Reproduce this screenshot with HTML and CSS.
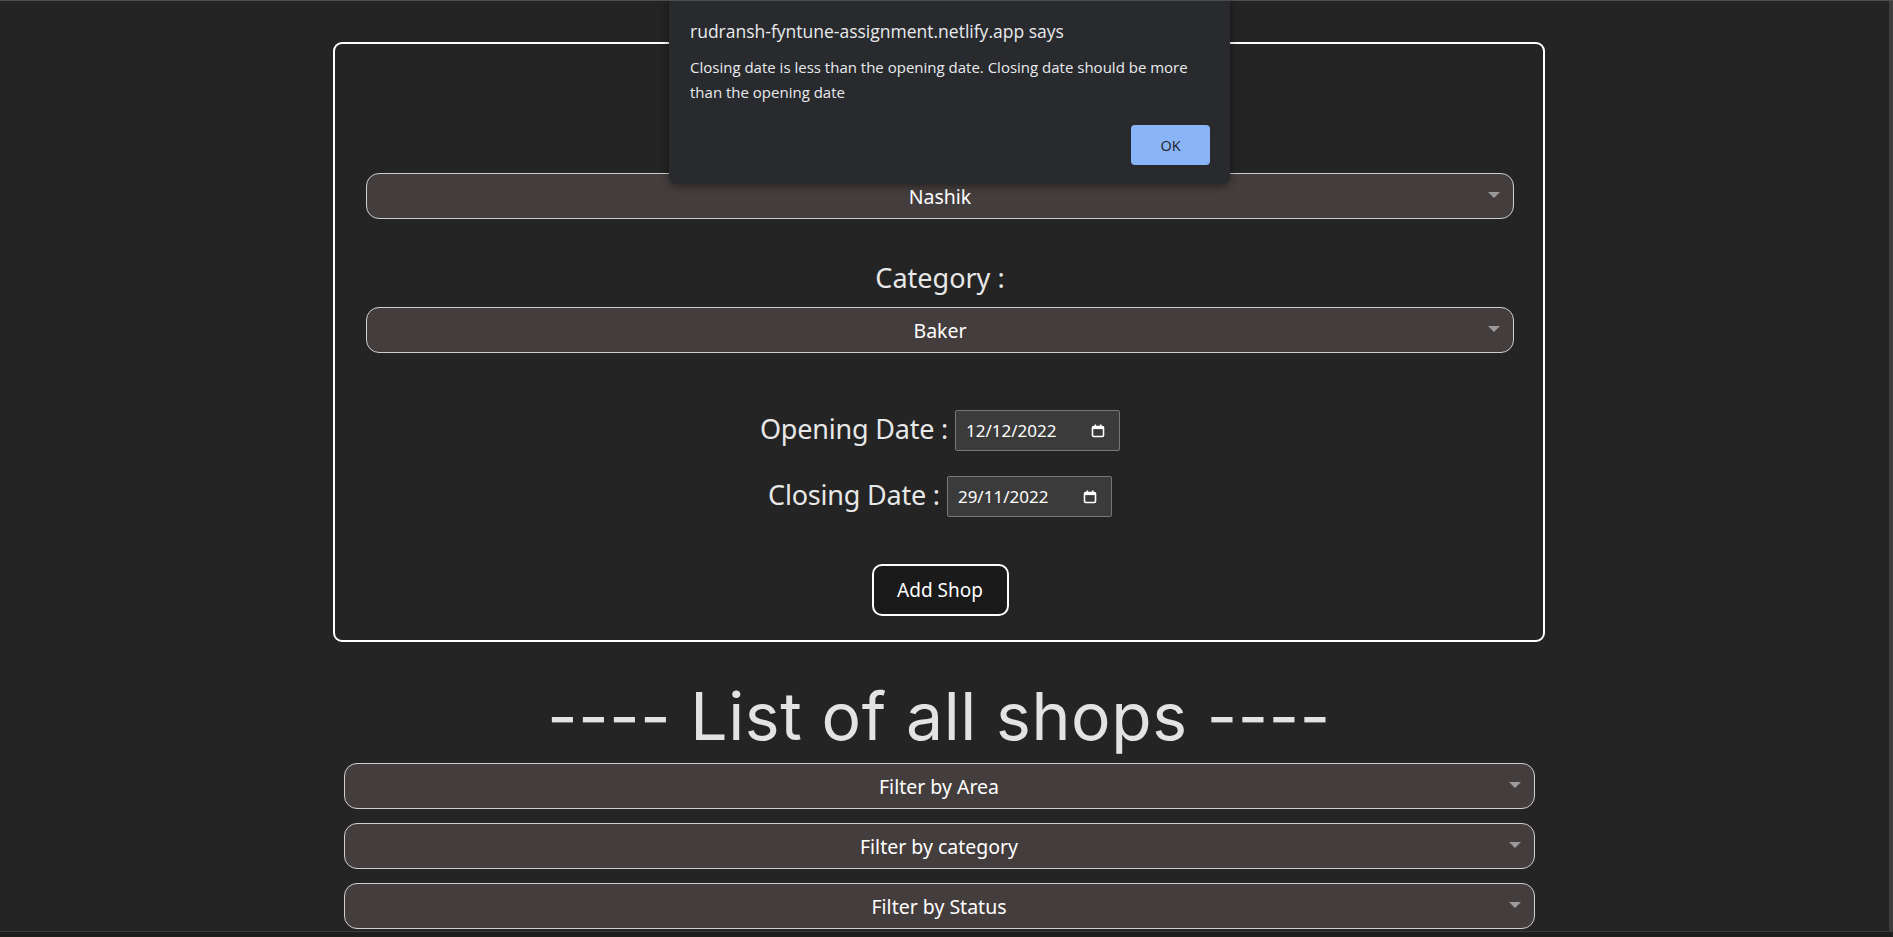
FILE: index.html
```html
<!DOCTYPE html>
<html lang="en">
<head>
<meta charset="utf-8">
<title>Shops</title>
<link rel="stylesheet" href="styles.css">
</head>
<body>
<div class="frame">
  <div class="viewport">
    <main class="page">
      <form class="card">
        <label class="field-label">Area :</label>
        <div class="select-wrap">
          <select class="select"><option>Nashik</option></select>
        </div>
        <label class="field-label spaced">Category :</label>
        <div class="select-wrap">
          <select class="select"><option>Baker</option></select>
        </div>
        <div class="dates">
          <div class="date-row">
            <span class="date-label">Opening Date :</span>
            <div class="date-input">
              <span>12/12/2022</span>
              <svg class="cal" width="14" height="14" viewBox="0 0 14 14"><rect x="1.5" y="2.5" width="11" height="10" rx="1.2" fill="none" stroke="#fff" stroke-width="1.6"/><rect x="1.5" y="2.5" width="11" height="2.6" fill="#fff"/><rect x="3.5" y="0.5" width="1.6" height="3" fill="#fff"/><rect x="8.9" y="0.5" width="1.6" height="3" fill="#fff"/></svg>
            </div>
          </div>
          <div class="date-row">
            <span class="date-label">Closing Date :</span>
            <div class="date-input">
              <span>29/11/2022</span>
              <svg class="cal" width="14" height="14" viewBox="0 0 14 14"><rect x="1.5" y="2.5" width="11" height="10" rx="1.2" fill="none" stroke="#fff" stroke-width="1.6"/><rect x="1.5" y="2.5" width="11" height="2.6" fill="#fff"/><rect x="3.5" y="0.5" width="1.6" height="3" fill="#fff"/><rect x="8.9" y="0.5" width="1.6" height="3" fill="#fff"/></svg>
            </div>
          </div>
        </div>
        <button type="button" class="add-btn">Add Shop</button>
      </form>

      <h1 class="list-title">---- List of all shops ----</h1>

      <div class="filters">
        <div class="select-wrap filter"><select class="select"><option>Filter by Area</option></select></div>
        <div class="select-wrap filter"><select class="select"><option>Filter by category</option></select></div>
        <div class="select-wrap filter"><select class="select"><option>Filter by Status</option></select></div>
      </div>
    </main>

    <div class="dialog" role="alertdialog">
      <div class="dialog-title">rudransh-fyntune-assignment.netlify.app says</div>
      <div class="dialog-msg">Closing date is less than the opening date. Closing date should be more than the opening date</div>
      <div class="dialog-actions"><button type="button" class="ok-btn">OK</button></div>
    </div>
  </div>
  <div class="scroll-strip"></div>
</div>
<div class="bottom-bar"></div>
</body>
</html>
```
FILE: styles.css
```css
html, body {
  margin: 0;
  padding: 0;
  height: 100%;
  overflow: hidden;
  background: #1e1f1c;
}
body {
  display: flex;
  flex-direction: column;
  font-family: "Noto Sans", "Open Sans", sans-serif;
  color: #e6e6e6;
}
.frame {
  display: flex;
  height: 932px;
  border-top: 1px solid #4d4d4d;
  box-sizing: border-box;
  border-bottom: 1px solid #3a3a3a;
}
.viewport {
  position: relative;
  flex: 1;
  background: #242424;
  overflow: hidden;
}
.scroll-strip {
  width: 4px;
  background: #3e3e3e;
}
.bottom-bar {
  flex: 1;
  background: #1e1f1c;
}
.page {
  display: flex;
  flex-direction: column;
  align-items: center;
  padding-right: 11px;
  padding-top: 41px;
}
.card {
  width: 1212px;
  box-sizing: border-box;
  border: 2px solid #ffffff;
  border-radius: 9px;
  padding: 82px 29px 24px 31px;
  display: flex;
  flex-direction: column;
  align-items: center;
}
.field-label {
  display: block;
  font-size: 27px;
  line-height: 36px;
  height: 36px;
  margin-bottom: 11px;
  color: #e8e8e8;
}
.field-label.spaced {
  margin-top: 41px;
}
.select-wrap {
  position: relative;
  width: 100%;
}
.select-wrap::after {
  content: "";
  position: absolute;
  right: 14px;
  top: 50%;
  margin-top: -4px;
  border-left: 6px solid transparent;
  border-right: 6px solid transparent;
  border-top: 6px solid #9a9a9a;
  pointer-events: none;
}
.select {
  -webkit-appearance: none;
  appearance: none;
  width: 100%;
  height: 46px;
  box-sizing: border-box;
  background: #443d3d;
  border: 1px solid #cfcfcf;
  border-radius: 13px;
  color: #ffffff;
  font-family: "Noto Sans", "Open Sans", sans-serif;
  font-size: 19.5px;
  text-align: center;
  text-align-last: center;
  outline: none;
}
.dates {
  margin-top: 57px;
  display: flex;
  flex-direction: column;
  align-items: center;
  gap: 25px;
}
.date-row {
  display: flex;
  align-items: center;
  gap: 7px;
}
.date-label {
  font-size: 27px;
  line-height: 36px;
  color: #e8e8e8;
  letter-spacing: -0.2px;
  margin-top: -4px;
}
.date-input {
  width: 165px;
  height: 41px;
  box-sizing: border-box;
  background: #3b3b3b;
  border: 1px solid #777;
  border-radius: 2px;
  display: flex;
  align-items: center;
  justify-content: space-between;
  padding: 0 14px 0 10px;
  font-family: "Noto Sans", sans-serif;
  font-size: 17px;
  color: #ffffff;
}
.cal {
  display: block;
}
.add-btn {
  margin-top: 47px;
  width: 137px;
  height: 52px;
  box-sizing: border-box;
  border: 2px solid #ffffff;
  border-radius: 10px;
  background: #1a1a1a;
  color: #ffffff;
  font-family: "Noto Sans", sans-serif;
  font-size: 19px;
}
.list-title {
  margin: 34px 0 7px;
  font-family: Inter, "Noto Sans", sans-serif;
  font-weight: 400;
  font-size: 66px;
  line-height: 80px;
  letter-spacing: 0.6px;
  color: #e3e3e3;
}
.filters {
  width: 1191px;
  display: flex;
  flex-direction: column;
  gap: 14px;
}
.filter .select {
  height: 46px;
}
.dialog {
  position: absolute;
  top: -1px;
  left: 669px;
  width: 561px;
  height: 184px;
  box-sizing: border-box;
  background: #292a2d;
  border-radius: 0 0 8px 8px;
  box-shadow: 0 2px 8px rgba(0, 0, 0, 0.45);
  padding: 19px 20px 19px 21px;
  display: flex;
  flex-direction: column;
  font-family: "Open Sans", "Noto Sans", sans-serif;
}
.dialog-title {
  font-size: 17.5px;
  line-height: 24px;
  color: #e8eaed;
}
.dialog-msg {
  margin-top: 12px;
  font-size: 15px;
  line-height: 25px;
  color: #e8eaed;
}
.dialog-actions {
  margin-top: auto;
  display: flex;
  justify-content: flex-end;
}
.ok-btn {
  width: 79px;
  height: 40px;
  border: none;
  border-radius: 4px;
  background: #8ab4f8;
  color: #202124;
  font-family: "Open Sans", "Noto Sans", sans-serif;
  font-size: 14.5px;
}
```
